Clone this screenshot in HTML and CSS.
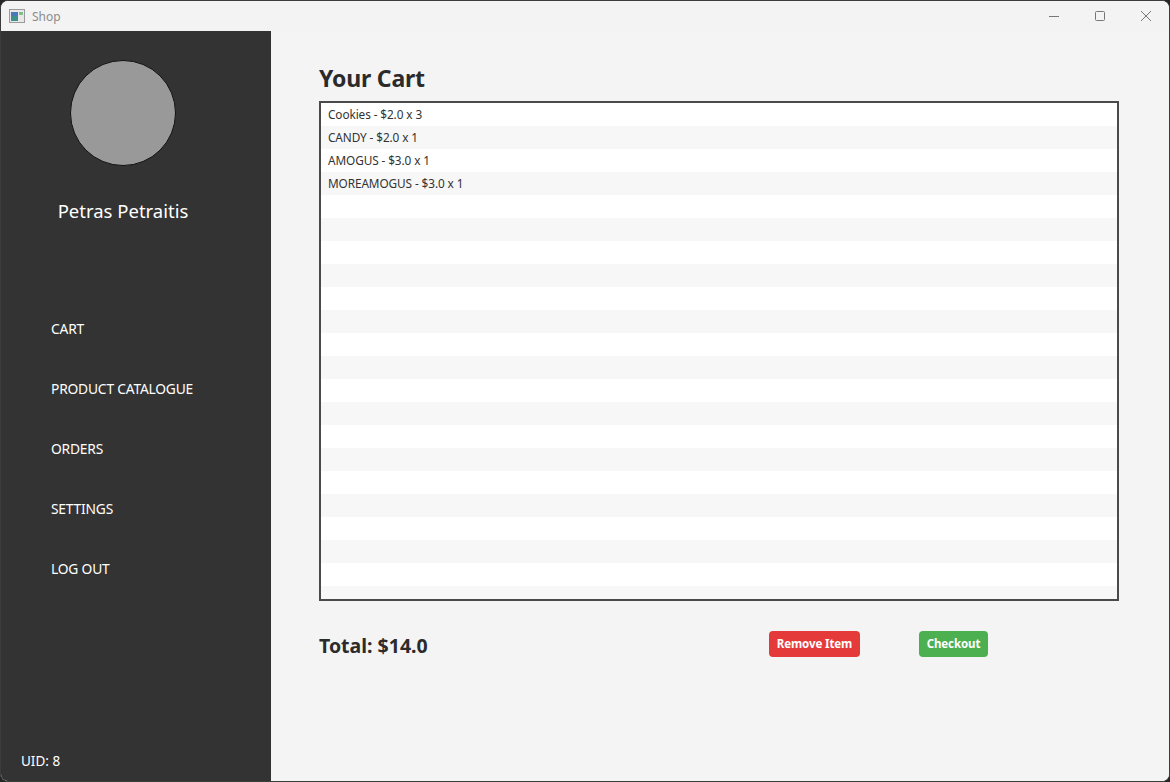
FILE: index.html
```html
<!DOCTYPE html>
<html>
<head>
<meta charset="utf-8">
<title>Shop</title>
<link rel="stylesheet" href="styles.css">
</head>
<body>
<div class="window">
  <div class="titlebar">
    <div class="app">
      <svg class="app-icon" width="16" height="14" viewBox="0 0 16 14">
        <rect x="0.5" y="0.5" width="15" height="13" fill="#e8e8e8" stroke="#9a9a9a"/>
        <rect x="2" y="3" width="7" height="9" fill="#3f8f8a"/>
        <rect x="2" y="3" width="7" height="4" fill="#4a79b8"/>
        <rect x="10" y="3" width="4" height="3" fill="#7fc08a"/>
      </svg>
      <span class="app-title">Shop</span>
    </div>
    <div class="controls">
      <svg width="46" height="30" viewBox="0 0 46 30"><line x1="18" y1="15.5" x2="28" y2="15.5" stroke="#777" stroke-width="1"/></svg>
      <svg width="46" height="30" viewBox="0 0 46 30"><rect x="18.5" y="10.5" width="9" height="9" rx="1" fill="none" stroke="#777" stroke-width="1"/></svg>
      <svg width="46" height="30" viewBox="0 0 46 30"><path d="M18 10 L28 20 M28 10 L18 20" stroke="#777" stroke-width="1"/></svg>
    </div>
  </div>
  <div class="body">
    <aside class="sidebar">
      <div class="avatar"></div>
      <div class="username">Petras Petraitis</div>
      <nav class="nav">
        <div class="nav-item">CART</div>
        <div class="nav-item">PRODUCT CATALOGUE</div>
        <div class="nav-item">ORDERS</div>
        <div class="nav-item">SETTINGS</div>
        <div class="nav-item">LOG OUT</div>
      </nav>
      <div class="uid">UID: 8</div>
    </aside>
    <main class="main">
      <h1 class="heading">Your Cart</h1>
      <div class="list">
        <div class="row">Cookies - $2.0 x 3</div>
        <div class="row">CANDY - $2.0 x 1</div>
        <div class="row">AMOGUS - $3.0 x 1</div>
        <div class="row">MOREAMOGUS - $3.0 x 1</div>
      </div>
      <div class="footer">
        <div class="total">Total: $14.0</div>
        <button class="btn btn-remove">Remove Item</button>
        <button class="btn btn-checkout">Checkout</button>
      </div>
    </main>
  </div>
</div>
</body>
</html>
```
FILE: styles.css
```css
html, body {
  margin: 0;
  padding: 0;
  background: #262626;
}
body {
  width: 1170px;
  height: 782px;
  overflow: hidden;
  font-family: "Noto Sans", "Open Sans", sans-serif;
}
.window {
  width: 1170px;
  height: 782px;
  box-sizing: border-box;
  border: 1px solid #3c3c3c;
  border-radius: 8px;
  overflow: hidden;
  background: #f3f3f3;
  display: flex;
  flex-direction: column;
}
.titlebar {
  height: 30px;
  flex: none;
  display: flex;
  justify-content: space-between;
  align-items: center;
  background: #f3f3f3;
}
.app {
  display: flex;
  align-items: center;
  padding-left: 8px;
  gap: 7px;
}
.app-icon { display: block; }
.app-title {
  font-size: 12px;
  color: #8c8c8c;
}
.controls {
  display: flex;
}
.controls svg { display: block; }
.body {
  flex: 1;
  display: flex;
  min-height: 0;
}
.sidebar {
  width: 270px;
  flex: none;
  background: #333333;
  color: #ffffff;
  display: flex;
  flex-direction: column;
  align-items: flex-start;
  position: relative;
}
.avatar {
  width: 104px;
  height: 104px;
  border-radius: 50%;
  background: #999999;
  border: 1px solid #111;
  margin: 29px 0 0 69px;
}
.username {
  font-size: 18.5px;
  margin-top: 32px;
  width: 244px;
  text-align: center;
  line-height: 26px;
}
.nav {
  display: flex;
  flex-direction: column;
  gap: 40px;
  margin-top: 95px;
  padding-left: 50px;
}
.nav-item {
  font-size: 13.8px;
  line-height: 20px;
  letter-spacing: -0.2px;
}
.uid {
  position: absolute;
  left: 20px;
  bottom: 11px;
  font-size: 13.5px;
  line-height: 18px;
}
.main {
  flex: 1;
  padding: 32px 50px 0 48px;
  background: #f4f4f4;
}
.heading {
  margin: 0;
  font-size: 23px;
  font-weight: 700;
  color: #2b2b2b;
  line-height: 30px;
  letter-spacing: -0.2px;
}
.list {
  margin-top: 8px;
  height: 500px;
  border: 2px solid #4a4a4a;
  box-sizing: border-box;
  background: repeating-linear-gradient(to bottom, #ffffff 0, #ffffff 23px, #f7f7f7 23px, #f7f7f7 46px);
  overflow: hidden;
}
.row {
  height: 23px;
  line-height: 23px;
  padding-left: 7px;
  font-size: 11.8px;
  color: #333;
  letter-spacing: -0.1px;
}
.footer {
  display: flex;
  align-items: center;
  margin-top: 29px;
  height: 27px;
}
.total {
  font-size: 19.5px;
  font-weight: 700;
  color: #2b2b2b;
  width: 450px;
  margin-top: 4px;
  letter-spacing: 0;
}
.btn {
  font-family: inherit;
  border: none;
  border-radius: 4px;
  color: #fff;
  font-weight: 700;
  font-size: 11.5px;
  height: 26px;
  padding: 0;
  letter-spacing: -0.1px;
}
.btn-remove {
  background: #e53a3a;
  width: 91px;
}
.btn-checkout {
  background: #4caf50;
  width: 69px;
  margin-left: 59px;
}
```
